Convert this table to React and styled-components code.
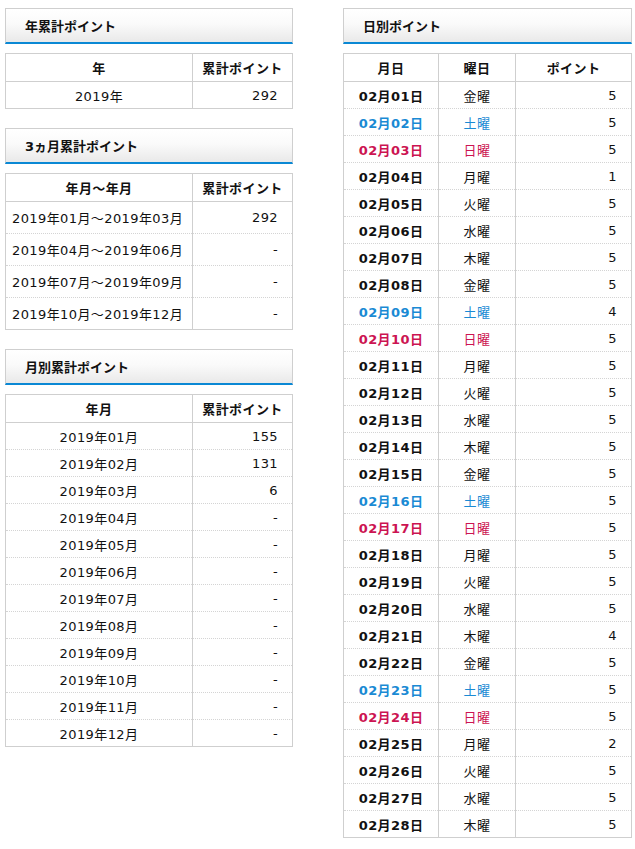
import styled, { createGlobalStyle } from "styled-components";

const GlobalStyle = createGlobalStyle`
    body {
        margin: 0;
        background: #fff;
        font-family: "DejaVu Sans", "Noto Sans CJK JP", sans-serif;
        font-size: 13px;
        color: #111;
    }
`;

// ─── Layout ────────────────────────────────────────────────────────────────
const Page = styled.div`
    display: flex;
    align-items: flex-start;
    gap: 50px;
    padding: 8px 0 0 5px;
`;

const Column = styled.div`
    width: ${(p) => p.$width}px;
    display: flex;
    flex-direction: column;
`;

const Section = styled.section`
    margin-bottom: 19px;
`;

const PanelTitle = styled.h2`
    margin: 0 0 9px;
    height: 33px;
    box-sizing: content-box;
    display: flex;
    align-items: center;
    padding-left: 19px;
    font-size: 13px;
    font-weight: 700;
    color: #111;
    border: 1px solid #cfcfcf;
    border-bottom: 2px solid #0a88d4;
    background: linear-gradient(#ffffff 0%, #fafafa 45%, #e9e9e9 100%);
`;

// ─── Table ─────────────────────────────────────────────────────────────────
const Table = styled.table`
    width: 100%;
    border-collapse: collapse;
    border: 1px solid #cfcfcf;
    table-layout: fixed;
    letter-spacing: 0.4px;
`;

const Th = styled.th`
    height: 27px;
    padding: 0;
    font-weight: 700;
    text-align: center;
    border: 1px solid #cfcfcf;
    width: ${(p) => (p.$w ? `${p.$w}px` : "auto")};
`;

const Row = styled.tr`
    height: ${(p) => p.$h}px;
    & + & > td {
        border-top: 1px dotted #d4d4d4;
    }
`;

const Td = styled.td`
    padding: 0 ${(p) => (p.$align === "right" ? "14px" : p.$align === "left" ? "6px" : "0")};
    text-align: ${(p) => p.$align || "center"};
    border-left: 1px solid #cfcfcf;
    font-weight: ${(p) => (p.$bold ? 700 : 400)};
    color: ${(p) =>
        p.$day === "sat" ? "#1a8ad4" :
            p.$day === "sun" ? "#cc1452" :
                "#111"};
`;

// ─── Data ──────────────────────────────────────────────────────────────────
const quarters = [
    ["2019年01月～2019年03月", "292"],
    ["2019年04月～2019年06月", "-"],
    ["2019年07月～2019年09月", "-"],
    ["2019年10月～2019年12月", "-"],
];

const monthly = Array.from({ length: 12 }, (_, i) => [
    `2019年${String(i + 1).padStart(2, "0")}月`,
    ["155", "131", "6"][i] ?? "-",
]);

const weekdays = ["金", "土", "日", "月", "火", "水", "木"];
const dailyPoints = [5, 5, 5, 1, 5, 5, 5, 5, 4, 5, 5, 5, 5, 5, 5, 5, 5, 5, 5, 5, 4, 5, 5, 5, 2, 5, 5, 5];

const daily = dailyPoints.map((pt, i) => {
    const wd = weekdays[i % 7];
    return {
        date: `02月${String(i + 1).padStart(2, "0")}日`,
        wd: `${wd}曜`,
        day: wd === "土" ? "sat" : wd === "日" ? "sun" : null,
        pt,
    };
});

// ─── App ───────────────────────────────────────────────────────────────────
export default function App() {
    return (
        <>
            <GlobalStyle />
            <Page>
                <Column $width={288}>
                    <Section>
                        <PanelTitle>年累計ポイント</PanelTitle>
                        <Table>
                            <thead>
                                <tr>
                                    <Th>年</Th>
                                    <Th $w={99}>累計ポイント</Th>
                                </tr>
                            </thead>
                            <tbody>
                                <Row $h={27}>
                                    <Td>2019年</Td>
                                    <Td $align="right">292</Td>
                                </Row>
                            </tbody>
                        </Table>
                    </Section>

                    <Section>
                        <PanelTitle>3ヵ月累計ポイント</PanelTitle>
                        <Table>
                            <thead>
                                <tr>
                                    <Th>年月～年月</Th>
                                    <Th $w={99}>累計ポイント</Th>
                                </tr>
                            </thead>
                            <tbody>
                                {quarters.map(([label, val]) => (
                                    <Row key={label} $h={32}>
                                        <Td $align="left">{label}</Td>
                                        <Td $align="right">{val}</Td>
                                    </Row>
                                ))}
                            </tbody>
                        </Table>
                    </Section>

                    <Section>
                        <PanelTitle>月別累計ポイント</PanelTitle>
                        <Table>
                            <thead>
                                <tr>
                                    <Th>年月</Th>
                                    <Th $w={99}>累計ポイント</Th>
                                </tr>
                            </thead>
                            <tbody>
                                {monthly.map(([label, val]) => (
                                    <Row key={label} $h={27}>
                                        <Td>{label}</Td>
                                        <Td $align="right">{val}</Td>
                                    </Row>
                                ))}
                            </tbody>
                        </Table>
                    </Section>
                </Column>

                <Column $width={289}>
                    <Section>
                        <PanelTitle>日別ポイント</PanelTitle>
                        <Table>
                            <thead>
                                <tr>
                                    <Th $w={94}>月日</Th>
                                    <Th $w={76}>曜日</Th>
                                    <Th>ポイント</Th>
                                </tr>
                            </thead>
                            <tbody>
                                {daily.map((d) => (
                                    <Row key={d.date} $h={27}>
                                        <Td $bold $day={d.day}>{d.date}</Td>
                                        <Td $day={d.day}>{d.wd}</Td>
                                        <Td $align="right">{d.pt}</Td>
                                    </Row>
                                ))}
                            </tbody>
                        </Table>
                    </Section>
                </Column>
            </Page>
        </>
    );
}
